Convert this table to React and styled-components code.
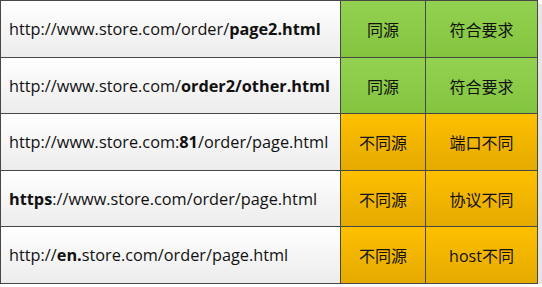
import React from 'react';
import styled, { createGlobalStyle } from 'styled-components';

const Global = createGlobalStyle`
  body {
    margin: 0;
    background: #fff;
    font-family: "Open Sans", "Noto Sans CJK SC", sans-serif;
  }
`;

const Table = styled.div`
  display: grid;
  grid-template-columns: 339px 84px 111px;
  grid-template-rows: 56px 55px 56px 55px 56px;
  gap: 1px;
  width: max-content;
  background: #474747;
  border: 1px solid #474747;
  box-shadow: 4px 4px 0 #e6e6e6;
`;

const fills = {
  url: 'linear-gradient(#ffffff, #ececec)',
  ok: 'linear-gradient(#93d251, #83c43f)',
  bad: 'linear-gradient(#ffc000, #e4aa00)',
};

const Cell = styled.div`
  display: flex;
  align-items: center;
  justify-content: ${p => (p.$kind === 'url' ? 'flex-start' : 'center')};
  padding-left: ${p => (p.$kind === 'url' ? '8px' : '0')};
  background: ${p => fills[p.$kind]};
  color: #111;
  font-size: ${p => (p.$kind === 'url' ? '16.3px' : '16px')};
  white-space: nowrap;
`;

const B = styled.b`
  font-weight: 700;
`;

const rows = [
  { url: <>http://www.store.com/order/<B>page2.html</B></>, kind: 'ok', same: '同源', note: '符合要求' },
  { url: <>http://www.store.com/<B>order2/other.html</B></>, kind: 'ok', same: '同源', note: '符合要求' },
  { url: <>http://www.store.com:<B>81</B>/order/page.html</>, kind: 'bad', same: '不同源', note: '端口不同' },
  { url: <><B>https</B>://www.store.com/order/page.html</>, kind: 'bad', same: '不同源', note: '协议不同' },
  { url: <>http://<B>en.</B>store.com/order/page.html</>, kind: 'bad', same: '不同源', note: 'host不同' },
];

export default function App() {
  return (
    <>
      <Global />
      <Table>
        {rows.map((r, i) => (
          <React.Fragment key={i}>
            <Cell $kind="url">{r.url}</Cell>
            <Cell $kind={r.kind}>{r.same}</Cell>
            <Cell $kind={r.kind}>{r.note}</Cell>
          </React.Fragment>
        ))}
      </Table>
    </>
  );
}
